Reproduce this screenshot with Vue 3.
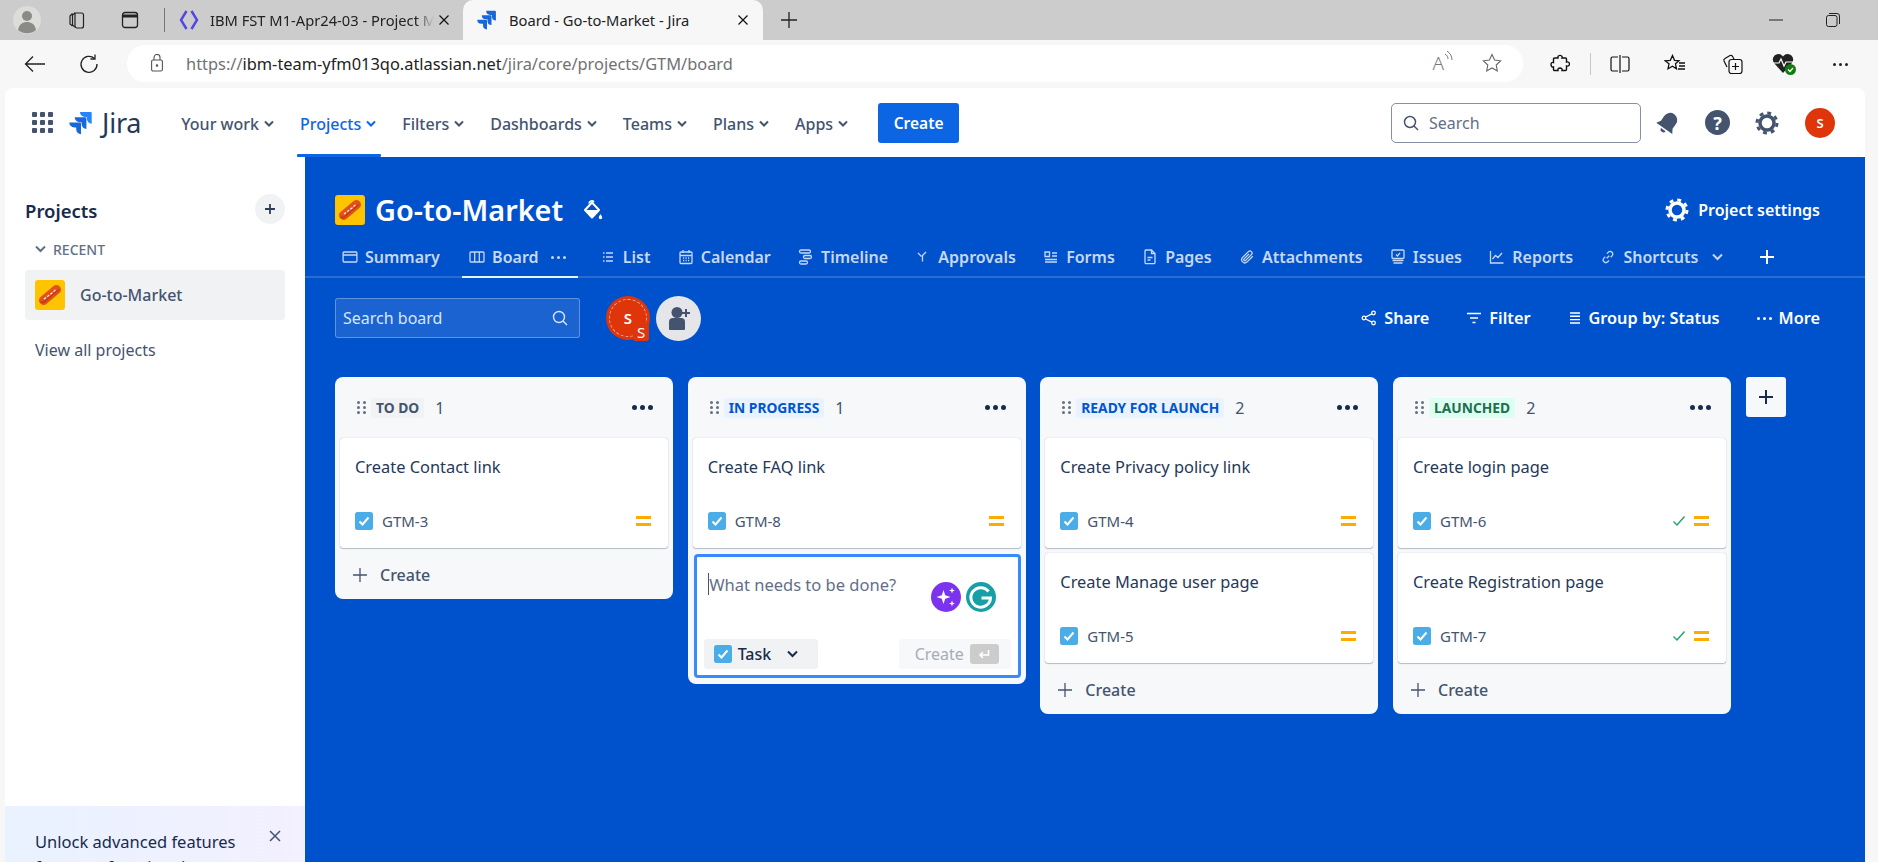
<script setup>
const navItems = [
  { label: 'Your work' },
  { label: 'Projects', active: true },
  { label: 'Filters' },
  { label: 'Dashboards' },
  { label: 'Teams' },
  { label: 'Plans' },
  { label: 'Apps' }
]
const tabs = [
  { label: 'Summary', d: 'M2 3h12a.9.9 0 0 1 .9.9v8.2a.9.9 0 0 1-.9.9H2a.9.9 0 0 1-.9-.9V3.900A.9.9 0 0 1 2 3zM1.100 6h13.800' },
  { label: 'Board', active: true, d: 'M2 3h12a1 1 0 0 1 1 1v8a1 1 0 0 1-1 1H2a1 1 0 0 1-1-1V4a1 1 0 0 1 1-1zM5.700 3v10M10.300 3v10' },
  { label: 'List', d: 'M3 4h1.500M6 4h7M3 8h1.500M6 8h7M3 12h1.500M6 12h7' },
  { label: 'Calendar', d: 'M3 3h10a1 1 0 0 1 1 1v9.500a1 1 0 0 1-1 1H3a1 1 0 0 1-1-1V4a1 1 0 0 1 1-1zM5 1v3M11 1v3M2 6.500h12M5 9h1.200M7.500 9h1.200M10 9h1.200M5 11.500h1.200M7.500 11.500h1.200M10 11.500h1.200' },
  { label: 'Timeline', d: 'M3 1h8a1.300 1.300 0 0 1 0 3H3a1.300 1.300 0 0 1 0-3zM7 6.500h5a1.300 1.300 0 0 1 0 3H7a1.300 1.300 0 0 1 0-3zM3 12h5a1.300 1.300 0 0 1 0 3H3a1.300 1.300 0 0 1 0-3z' },
  { label: 'Approvals', d: 'M3 4l3.500 3.500M11 3L7.500 6.500v6' },
  { label: 'Forms', d: 'M2 3h4.500v4.500H2zM9 4h5M9 7h5M2 10.500h12M2 13h12' },
  { label: 'Pages', d: 'M4 1h5.500L13 4.500v9a1.200 1.200 0 0 1-1.200 1.200H4.200A1.200 1.200 0 0 1 3 13.500V2.200A1.200 1.200 0 0 1 4 1zM9.500 1v3.500H13M5.500 8.500h5M5.500 11h3' },
  { label: 'Attachments', d: 'M13.800 7.200l-5.900 5.900a3.200 3.200 0 0 1-4.500-4.500l6-6a2.100 2.100 0 0 1 3 3l-5.800 5.800a1 1 0 0 1-1.500-1.500l5-5' },
  { label: 'Issues', d: 'M3 1h10a1 1 0 0 1 1 1v6.500a1 1 0 0 1-1 1H3a1 1 0 0 1-1-1V2a1 1 0 0 1 1-1zM6 5.500l1.500 1.500L10 3.800M2.500 11.500h11M3.500 14h9' },
  { label: 'Reports', d: 'M1.500 2v12h13M3.500 10l3-3.500 2.500 2L13 4' },
  { label: 'Shortcuts', d: 'M6.700 9.300l2.600-2.600M7 4.500l1.300-1.300a2.600 2.600 0 0 1 3.700 3.700l-1.300 1.300M9 11.500l-1.300 1.300a2.600 2.600 0 0 1-3.700-3.700l1.300-1.300' }
]
const columns = [
  { name: 'TO DO', tone: 'grey', count: 1, cards: [{ title: 'Create Contact link', key: 'GTM-3' }] },
  { name: 'IN PROGRESS', tone: 'blue', count: 1, composer: true, cards: [{ title: 'Create FAQ link', key: 'GTM-8' }] },
  { name: 'READY FOR LAUNCH', tone: 'blue', count: 2, cards: [{ title: 'Create Privacy policy link', key: 'GTM-4' }, { title: 'Create Manage user page', key: 'GTM-5' }] },
  { name: 'LAUNCHED', tone: 'green', count: 2, cards: [{ title: 'Create login page', key: 'GTM-6', done: true }, { title: 'Create Registration page', key: 'GTM-7', done: true }] }
]
</script>

<template>
  <div class="page">
    <header class="tabstrip">
      <span class="profile">
        <svg width="28" height="28" viewBox="0 0 28 28"><circle cx="14" cy="14" r="14" fill="#dcdcd8"/><circle cx="14" cy="10" r="5" fill="#8a8a86"/><path d="M5 24c1-6 5-8 9-8s8 2 9 8a14 14 0 0 1-18 0z" fill="#8a8a86"/></svg>
      </span>
      <svg class="workspaces" width="20" height="20" viewBox="0 0 20 20" fill="none" stroke="#222" stroke-width="1.200"><path d="M8 3h6.500a2 2 0 0 1 2 2v11a2 2 0 0 1-2 2H10a2 2 0 0 1-2-2z"/><path d="M8 3L5.500 5v10L8 17M5.500 3.500L3 6v8l2.500 2"/></svg>
      <svg class="tab-actions" width="20" height="20" viewBox="0 0 20 20" fill="none" stroke="#222" stroke-width="1.300"><rect x="2.500" y="2.500" width="15" height="15" rx="2.500"/><path d="M2.500 6h15" stroke-width="3"/></svg>
      <span class="strip-divider"></span>
      <div class="tab tab-idle">
        <svg class="tab-fav" width="22" height="22" viewBox="0 0 22 22" fill="none" stroke="#4f46e5" stroke-width="2.400"><path d="M8.500 2L3 11l5.500 9M13.500 2L19 11l-5.500 9"/></svg>
        <span class="tab-title tab-fade">IBM FST M1-Apr24-03 - Project M</span>
        <svg class="tab-x" width="12" height="12" viewBox="0 0 12 12" stroke="#111" stroke-width="1.200"><path d="M1.500 1.500l9 9M10.500 1.500l-9 9"/></svg>
      </div>
      <div class="tab tab-live">
        <svg class="tab-fav" width="20" height="20" viewBox="0 0 24 24" fill="#1868db"><path d="M21.700 1H11a4.900 4.900 0 0 0 4.900 4.900h2v1.900a4.900 4.900 0 0 0 4.800 4.900V2a1 1 0 0 0-1-1z"/><path d="M16.400 6.300H5.700a4.900 4.900 0 0 0 4.900 4.900h2v1.900a4.900 4.900 0 0 0 4.800 4.900V7.300a1 1 0 0 0-1-1z"/><path d="M11 11.600H.3a4.900 4.900 0 0 0 4.900 4.900h2v1.900a4.900 4.900 0 0 0 4.800 4.900V12.600a1 1 0 0 0-1-1z"/></svg>
        <span class="tab-title">Board - Go-to-Market - Jira</span>
        <svg class="tab-x" width="12" height="12" viewBox="0 0 12 12" stroke="#111" stroke-width="1.200"><path d="M1.500 1.500l9 9M10.500 1.500l-9 9"/></svg>
      </div>
      <svg class="new-tab" width="16" height="16" viewBox="0 0 16 16" stroke="#222" stroke-width="1.300"><path d="M8 0v16M0 8h16"/></svg>
      <span class="grow"></span>
      <svg class="win-min" width="14" height="2" viewBox="0 0 14 2"><path d="M0 1h14" stroke="#222"/></svg>
      <svg class="win-max" width="14" height="14" viewBox="0 0 14 14" fill="none" stroke="#222"><rect x=".5" y="2.500" width="10.500" height="11" rx="2"/><path d="M3 .5h8a2.500 2.500 0 0 1 2.500 2.500v8"/></svg>
    </header>

    <div class="addressbar">
      <svg class="back" width="22" height="18" viewBox="0 0 22 18" fill="none" stroke="#222" stroke-width="1.300"><path d="M21 9H1.500M9 1.500L1.500 9 9 16.500"/></svg>
      <svg class="reload" width="20" height="20" viewBox="0 0 20 20" fill="none" stroke="#222" stroke-width="1.300"><path d="M15.500 4.500A8 8 0 1 0 18 10"/><path d="M16 .5v4.500h-4.500"/></svg>
      <div class="omnibox">
        <svg class="lock" width="12" height="18" viewBox="0 0 12 18" fill="none" stroke="#555" stroke-width="1.100"><rect x=".6" y="6" width="10.800" height="11" rx="1.500"/><path d="M3 6V3.500a3 3 0 0 1 6 0V6"/><circle cx="6" cy="11.500" r=".7" fill="#555"/></svg>
        <span class="url"><span class="url-dim">https://</span><span class="url-host">ibm-team-yfm013qo.atlassian.net</span><span class="url-dim">/jira/core/projects/GTM/board</span></span>
        <span class="grow"></span>
        <span class="read-aloud">A<svg width="9" height="14" viewBox="0 0 9 14" fill="none" stroke="#777"><path d="M1 4c2 1 3 3 3 5M3 1c3 2 5 5 5 9"/></svg></span>
        <svg class="fav-star" width="20" height="20" viewBox="0 0 20 20" fill="none" stroke="#666" stroke-width="1.100"><path d="M10 1.500l2.600 5.500 6 .8-4.400 4.200 1.100 6L10 15l-5.300 3 1.100-6L1.400 7.800l6-.8z"/></svg>
      </div>
      <svg class="b-puzzle" width="20" height="20" viewBox="0 0 20 20" fill="none" stroke="#111" stroke-width="1.400"><path d="M8 2.500c.5-1.500 3.500-1.500 4 0 .3 1 0 1.500 0 1.500h3.500a1 1 0 0 1 1 1v3c1.500-.5 3 .5 3 2s-1.500 2.500-3 2v3.500a1 1 0 0 1-1 1H12c.5-1.500-.5-2.500-2-2.500s-2.500 1-2 2.500H4.500a1 1 0 0 1-1-1V13C2 13.500 1 12 1 10.500S2 8 3.500 8.500V5a1 1 0 0 1 1-1H8z"/></svg>
      <span class="b-div"></span>
      <svg class="b-split" width="20" height="18" viewBox="0 0 20 18" fill="none" stroke="#111" stroke-width="1.200"><path d="M8 2H2.500a1.500 1.500 0 0 0-1.500 1.500v11A1.500 1.500 0 0 0 2.500 16H8M12 2h5.500A1.500 1.500 0 0 1 19 3.500v11a1.500 1.500 0 0 1-1.500 1.500H12M10 0v18"/></svg>
      <svg class="b-favs" width="22" height="20" viewBox="0 0 22 20" fill="none" stroke="#111" stroke-width="1.300"><path d="M8.500 1.500l2 4.800 4.500.5-3.500 3 1 5-4-2.500-4.500 2.500 1-5L1 6.800l5.300-.5zM15 9h6M15 12h6M14 15h7"/></svg>
      <svg class="b-coll" width="22" height="22" viewBox="0 0 22 22" fill="none" stroke="#111" stroke-width="1.200"><path d="M5 14L2 8a2 2 0 0 1 1-2.500L8 2.500a2 2 0 0 1 2.500.8L12 6"/><rect x="7" y="6.500" width="13" height="14" rx="2.500"/><path d="M13.500 10v7M10 13.500h7"/></svg>
      <span class="b-heart">
        <svg width="26" height="24" viewBox="0 0 26 24"><path d="M11 21L2 11a5.500 5.500 0 0 1 8-7.500l1 1 1-1A5.500 5.500 0 0 1 20 11z" fill="#222"/><path d="M1 11h6l2-4 3 7 2-4h8" fill="none" stroke="#fff" stroke-width="1.200"/><circle cx="18.500" cy="17.500" r="5.500" fill="#107c10"/><path d="M16 17.500l2 2 3-3.500" fill="none" stroke="#fff" stroke-width="1.300"/></svg>
      </span>
      <span class="b-more"><i></i><i></i><i></i></span>
    </div>

    <div class="shell">
      <nav class="topnav">
        <span class="grid-dots"><i v-for="n in 9" :key="n"></i></span>
        <svg class="logo" width="24" height="24" viewBox="0 0 24 24" fill="#1868db"><path d="M21.700 1H11a4.900 4.900 0 0 0 4.900 4.900h2v1.900a4.900 4.900 0 0 0 4.800 4.900V2a1 1 0 0 0-1-1z" fill="#2684ff"/><path d="M16.400 6.300H5.700a4.900 4.900 0 0 0 4.900 4.900h2v1.900a4.900 4.900 0 0 0 4.800 4.900V7.300a1 1 0 0 0-1-1z"/><path d="M11 11.600H.3a4.900 4.900 0 0 0 4.900 4.900h2v1.900a4.900 4.900 0 0 0 4.800 4.900V12.600a1 1 0 0 0-1-1z"/></svg>
        <span class="wordmark">Jira</span>
        <ul class="nav-list">
          <li v-for="item in navItems" :key="item.label" class="nav-item" :class="{ 'nav-on': item.active }">
            <span>{{ item.label }}</span>
            <svg width="10" height="7" viewBox="0 0 10 7" fill="none" stroke="currentColor" stroke-width="2"><path d="M1 1.500l4 4 4-4"/></svg>
          </li>
        </ul>
        <button class="nav-create">Create</button>
        <span class="grow"></span>
        <label class="global-search">
          <svg width="16" height="16" viewBox="0 0 16 16" fill="none" stroke="#44546f" stroke-width="1.500"><circle cx="7" cy="7" r="5.500"/><path d="M11 11l4 4"/></svg>
          <span>Search</span>
        </label>
        <svg class="nav-bell" width="26" height="26" viewBox="0 0 24 24" fill="#44546f"><g transform="rotate(35 12 12)"><path d="M12 2a6.500 6.500 0 0 0-6.500 6.500V14L3 18h18l-2.500-4V8.500A6.500 6.500 0 0 0 12 2z"/><path d="M9.500 19.500a2.500 2.500 0 0 0 5 0z"/></g></svg>
        <span class="nav-help">?</span>
        <svg class="nav-gear" width="26" height="26" viewBox="0 0 26 26" fill="none" stroke="#44546f"><circle cx="13" cy="13" r="7" stroke-width="3.500"/><circle cx="13" cy="13" r="10" stroke-width="3" stroke-dasharray="3.850 4"/></svg>
        <span class="nav-avatar">S</span>
      </nav>

      <div class="body">
        <aside class="sidebar">
          <div class="side-head">
            <span class="side-title">Projects</span>
            <span class="side-add">
              <svg width="12" height="12" viewBox="0 0 12 12" stroke="#2c3e5d" stroke-width="1.800"><path d="M6 1v10M1 6h10"/></svg>
            </span>
          </div>
          <div class="side-recent">
            <svg width="11" height="8" viewBox="0 0 11 8" fill="none" stroke="#626f86" stroke-width="2"><path d="M1 1.500l4.500 4.500L10 1.500"/></svg>
            <span>RECENT</span>
          </div>
          <div class="side-project">
            <svg class="proj-icon" width="30" height="30" viewBox="0 0 30 30"><rect width="30" height="30" rx="3" fill="#ffc400"/><rect x="2" y="10.500" width="26" height="9" rx="4.500" transform="rotate(-40 15 15)" fill="#e2511c"/><path d="M6 21.500Q7 23 9 22L24 9.500" fill="none" stroke="#c23c0c" stroke-width="1.500"/><path d="M9 19l4-3 4-3 4-3.500" fill="none" stroke="#fff" stroke-width="1.100" stroke-dasharray="2.500 1.500"/></svg>
            <span>Go-to-Market</span>
          </div>
          <div class="side-all">View all projects</div>
          <span class="grow"></span>
          <div class="promo">
            <span class="promo-text">Unlock advanced features for more functional</span>
            <svg class="promo-x" width="12" height="12" viewBox="0 0 12 12" stroke="#44546f" stroke-width="1.500"><path d="M1 1l10 10M11 1L1 11"/></svg>
          </div>
        </aside>

        <main class="board">
          <div class="proj-head">
            <svg class="proj-icon" width="30" height="30" viewBox="0 0 30 30"><rect width="30" height="30" rx="3" fill="#ffc400"/><rect x="2" y="10.500" width="26" height="9" rx="4.500" transform="rotate(-40 15 15)" fill="#e2511c"/><path d="M6 21.500Q7 23 9 22L24 9.500" fill="none" stroke="#c23c0c" stroke-width="1.500"/><path d="M9 19l4-3 4-3 4-3.500" fill="none" stroke="#fff" stroke-width="1.100" stroke-dasharray="2.500 1.500"/></svg>
            <h1>Go-to-Market</h1>
            <svg class="paint" width="20" height="24" viewBox="0 0 20 24"><path d="M6 5.500a2.800 2.800 0 0 1 5-1.500" fill="none" stroke="#fff" stroke-width="1.600"/><path d="M9 4.500L16 12l-7 7.500L2 12z" fill="none" stroke="#fff" stroke-width="2" stroke-linejoin="round"/><path d="M2 12h14l-7 7.500z" fill="#fff"/><path d="M17.500 16c1 1.700 1.700 2.700 1.700 3.500a1.700 1.700 0 0 1-3.400 0c0-.8.700-1.800 1.700-3.500z" fill="#fff"/></svg>
            <span class="grow"></span>
            <svg width="26" height="26" viewBox="0 0 26 26" fill="none" stroke="#fff"><circle cx="13" cy="13" r="7" stroke-width="3.500"/><circle cx="13" cy="13" r="10" stroke-width="3" stroke-dasharray="3.850 4"/></svg>
            <span class="proj-settings">Project settings</span>
          </div>

          <div class="tabs">
            <div v-for="tab in tabs" :key="tab.label" class="tabitem" :class="{ 'tab-on': tab.active }">
              <svg width="16" height="16" viewBox="0 0 16 16" fill="none" stroke="currentColor" stroke-width="1.300"><path :d="tab.d"/></svg>
              <span>{{ tab.label }}</span>
              <span v-if="tab.active" class="tab-dots"><i></i><i></i><i></i></span>
            </div>
            <svg class="tab-chev" width="11" height="8" viewBox="0 0 11 8" fill="none" stroke="#c7d8f3" stroke-width="2"><path d="M1 1.500l4.500 4.500L10 1.500"/></svg>
            <svg class="tab-plus" width="16" height="16" viewBox="0 0 16 16" stroke="#fff" stroke-width="2"><path d="M8 1v14M1 8h14"/></svg>
          </div>

          <div class="toolbar">
            <label class="board-search">
              <span>Search board</span>
              <svg width="16" height="16" viewBox="0 0 16 16" fill="none" stroke="#dbe6f8" stroke-width="1.400"><circle cx="7" cy="7" r="5.500"/><path d="M11 11l4 4"/></svg>
            </label>
            <span class="tb-avatar"><span class="tb-ring">S</span><span class="tb-sub">S</span></span>
            <span class="tb-adduser">
              <svg width="26" height="26" viewBox="0 0 26 26" fill="#44546f"><circle cx="11" cy="7.500" r="5.500"/><path d="M3 17a4 4 0 0 1 4-4h8a4 4 0 0 1 4 4v7a1 1 0 0 1-1 1H4a1 1 0 0 1-1-1z"/><path d="M20 4v8M16 8h8" stroke="#44546f" stroke-width="2"/></svg>
            </span>
            <span class="grow"></span>
            <span class="tb-act">
              <svg width="16" height="16" viewBox="0 0 16 16" fill="none" stroke="#fff" stroke-width="1.300"><circle cx="3" cy="8" r="1.800"/><circle cx="12.500" cy="3" r="1.800"/><circle cx="12.500" cy="13" r="1.800"/><path d="M4.600 7l6.300-3.200M4.600 9l6.300 3.200"/></svg>Share</span>
            <span class="tb-act">
              <svg width="16" height="14" viewBox="0 0 16 14" stroke="#fff" stroke-width="1.500"><path d="M1 2.500h14M4 7h8M6.500 11.500h3"/></svg>Filter</span>
            <span class="tb-act">
              <svg width="14" height="14" viewBox="0 0 14 14" stroke="#fff" stroke-width="1.400"><path d="M2 2h10M2 5.300h10M2 8.600h10M2 12h10"/></svg>Group by: Status</span>
            <span class="tb-act">
              <span class="tb-dots"><i></i><i></i><i></i></span>More</span>
          </div>

          <section class="columns">
            <article v-for="col in columns" :key="col.name" class="column">
              <header class="col-head">
                <span class="grip"><i v-for="n in 6" :key="n"></i></span>
                <span class="lozenge" :class="'lz-' + col.tone">{{ col.name }}</span>
                <span class="col-count">{{ col.count }}</span>
                <span class="grow"></span>
                <span class="col-more"><i></i><i></i><i></i></span>
              </header>
              <div class="col-cards">
                <div v-for="card in col.cards" :key="card.key" class="card">
                  <div class="card-title">{{ card.title }}</div>
                  <div class="card-foot">
                    <svg class="task" width="18" height="18" viewBox="0 0 18 18"><rect width="18" height="18" rx="2.500" fill="#4bade8"/><path d="M4.500 9.500l3 3 6-7" fill="none" stroke="#fff" stroke-width="2"/></svg>
                    <span class="card-key">{{ card.key }}</span>
                    <span class="grow"></span>
                    <svg v-if="card.done" class="done" width="14" height="12" viewBox="0 0 14 12" fill="none" stroke="#22a06b" stroke-width="1.400"><path d="M1.500 6.500l3.500 3.500 7.500-8.500"/></svg>
                    <span class="prio"></span>
                  </div>
                </div>
              </div>
              <div v-if="col.composer" class="composer">
                <div class="composer-top">
                  <span class="caret"></span>
                  <span class="placeholder">What needs to be done?</span>
                </div>
                <div class="composer-aids">
                  <svg width="30" height="30" viewBox="0 0 30 30"><circle cx="15" cy="15" r="15" fill="#7c33ee"/><path d="M12.500 8l1.700 5.300 5.300 1.700-5.300 1.700-1.700 5.300-1.700-5.300L5.500 15l5.300-1.700z" fill="#fff"/><path d="M21 5.500l.8 2.200 2.200.8-2.200.8-.8 2.200-.8-2.200-2.200-.8 2.200-.8zM21 18.500l.8 2.200 2.200.8-2.200.8-.8 2.200-.8-2.200-2.200-.8 2.200-.8z" fill="#fff"/></svg>
                  <svg width="30" height="30" viewBox="0 0 30 30"><circle cx="15" cy="15" r="15" fill="#15a0a6"/><path d="M22.500 9.500A9.800 9.800 0 1 0 24.500 16H15.500" fill="none" stroke="#fff" stroke-width="3"/></svg>
                </div>
                <div class="composer-foot">
                  <span class="type-btn">
                    <svg class="task" width="18" height="18" viewBox="0 0 18 18"><rect width="18" height="18" rx="2.500" fill="#4bade8"/><path d="M4.500 9.500l3 3 6-7" fill="none" stroke="#fff" stroke-width="2"/></svg>
                    <span>Task</span>
                    <svg width="11" height="8" viewBox="0 0 11 8" fill="none" stroke="#172b4d" stroke-width="2"><path d="M1 1.500l4.500 4.500L10 1.500"/></svg>
                  </span>
                  <span class="grow"></span>
                  <span class="submit-btn">
                    <span>Create</span>
                    <span class="kbd"><svg width="12" height="10" viewBox="0 0 12 10" fill="none" stroke="#fff" stroke-width="1.600"><path d="M10.500 1v5H2M5 3L2 6l3 3"/></svg></span>
                  </span>
                </div>
              </div>
              <div v-else class="col-create">
                <svg width="14" height="14" viewBox="0 0 14 14" stroke="#44546f" stroke-width="1.300"><path d="M7 0v14M0 7h14"/></svg>
                <span>Create</span>
              </div>
            </article>
            <button class="add-col">
              <svg width="16" height="16" viewBox="0 0 16 16" stroke="#172b4d" stroke-width="2"><path d="M8 1v14M1 8h14"/></svg>
            </button>
          </section>
        </main>
      </div>
    </div>
  </div>
</template>

<style>
html, body { margin: 0; height: 100%; overflow: hidden; background: #f7f7f7; }
</style>

<style scoped>
* { box-sizing: border-box; }
i { display: block; font-style: normal; }
svg { display: block; flex: none; }
.grow { flex: 1; }
.page {
  width: 1878px; height: 862px; overflow: hidden; display: flex; flex-direction: column;
  background: #f7f7f7; color: #172b4d;
  font-family: "Noto Sans", "Open Sans", "Liberation Sans", sans-serif;
}

/* browser chrome */
.tabstrip { height: 40px; flex: none; background: #cccccc; display: flex; align-items: center; padding-left: 13px; }
.profile { width: 28px; height: 28px; display: block; }
.workspaces { margin-left: 26px; }
.tab-actions { margin-left: 33px; }
.strip-divider { width: 1px; height: 24px; background: #777; margin-left: 24px; }
.tab { height: 40px; display: flex; align-items: center; font-size: 14.700px; color: #222; }
.tab-idle { width: 292px; padding-left: 7px; margin-left: 6px; flex: none; }
.tab-live { width: 300px; flex: none; background: #f7f7f7; border-radius: 10px 10px 0 0; padding-left: 14px; }
.tab-title { margin-left: 10px; white-space: nowrap; overflow: hidden; }
.tab-fade { width: 224px; -webkit-mask-image: linear-gradient(90deg, #000 92%, transparent); mask-image: linear-gradient(90deg, #000 92%, transparent); }
.tab-live .tab-title { width: 222px; margin-left: 12px; }
.tab-x { margin-left: 4px; }
.tab-live .tab-x { margin-left: 6px; }
.new-tab { margin-left: 18px; }
.win-min { margin-right: 43px; }
.win-max { margin-right: 38px; }

.addressbar { height: 48px; flex: none; display: flex; align-items: center; padding: 0 0 0 24px; background: #f7f7f7; }
.reload { margin-left: 33px; }
.omnibox {
  width: 1396px; height: 37px; margin: -2px 0 0 28px; background: #fff; border-radius: 18px;
  display: flex; align-items: center; padding-left: 24px; font-size: 16.400px;
}
.url { margin-left: 23px; white-space: nowrap; }
.url-dim { color: #717171; }
.url-host { color: #222; }
.read-aloud { display: flex; align-items: flex-start; font-size: 19px; color: #777; font-weight: 300; }
.fav-star { margin: 0 21px 0 29px; }
.b-puzzle { margin-left: 27px; }
.b-div { width: 1px; height: 22px; background: #c8c8c8; margin-left: 20px; }
.b-split { margin-left: 19px; }
.b-favs { margin-left: 34px; }
.b-coll { margin-left: 36px; }
.b-heart { display: block; margin-left: 28px; }
.b-more { display: flex; gap: 3px; margin-left: 35px; }
.b-more i { width: 3px; height: 3px; border-radius: 50%; background: #222; }

.shell { flex: 1; margin: 0 13px 0 5px; min-height: 0; background: #fff; border-radius: 8px 8px 0 0; display: flex; flex-direction: column; overflow: hidden; }

/* Jira nav */
.topnav { height: 69px; flex: none; display: flex; align-items: center; padding-left: 27px; position: relative; font-size: 16px; }
.grid-dots { display: grid; grid-template-columns: repeat(3, 5px); gap: 3px; }
.grid-dots i { width: 5px; height: 5px; border-radius: 1px; background: #44546f; }
.logo { margin-left: 16px; }
.wordmark { margin-left: 9px; font-size: 27px; line-height: 1; font-weight: 400; color: #253858; letter-spacing: -.2px; }
.nav-list { display: flex; list-style: none; margin: 0 0 0 40px; padding: 0; gap: 26px; }
.nav-item { display: flex; align-items: center; gap: 5px; color: #44546f; font-weight: 500; white-space: nowrap; position: relative; height: 69px; padding-top: 2px; }
.nav-on { color: #0c66e4; }
.nav-on::after { content: ""; position: absolute; left: -3px; right: -5px; bottom: 0; height: 3px; background: #0c66e4; border-radius: 1px; }
.nav-create { width: 81px; height: 40px; margin-left: 30px; border: 0; border-radius: 3px; background: #0c66e4; color: #fff; font: 600 15.500px "Noto Sans", sans-serif; }
.global-search { width: 250px; height: 40px; border: 1px solid #8590a2; border-radius: 5px; display: flex; align-items: center; gap: 10px; padding-left: 11px; color: #626f86; font-size: 16px; }
.nav-bell { margin-left: 14px; }
.nav-help { width: 25px; height: 25px; margin-left: 24px; border-radius: 50%; background: #44546f; color: #fff; font-weight: 700; font-size: 18px; display: flex; align-items: center; justify-content: center; }
.nav-gear { margin-left: 24px; }
.nav-avatar { width: 30px; height: 30px; margin: 0 30px 0 25px; border-radius: 50%; background: #de350b; color: #fff; font-size: 13px; font-weight: 600; display: flex; align-items: center; justify-content: center; }

.body { flex: 1; min-height: 0; display: flex; }

/* sidebar */
.sidebar { width: 300px; flex: none; background: #fff; display: flex; flex-direction: column; padding-top: 37px; }
.side-head { display: flex; align-items: center; justify-content: space-between; padding: 0 20px 0 20px; height: 30px; }
.side-title { font-size: 18.500px; font-weight: 600; color: #172b4d; padding-top: 3px; }
.side-add { width: 30px; height: 30px; border-radius: 50%; background: #f1f2f4; display: flex; align-items: center; justify-content: center; }
.side-recent { display: flex; align-items: center; gap: 7px; margin: 15px 0 0 30px; height: 20px; color: #626f86; font-size: 14px; font-weight: 500; }
.side-project { margin: 11px 20px 0; height: 50px; border-radius: 4px; background: #f1f2f4; display: flex; align-items: center; gap: 15px; padding-left: 10px; color: #44546f; font-size: 16px; font-weight: 500; }
.side-all { margin: 19px 0 0 30px; color: #44546f; font-size: 16px; line-height: 22px; }
.promo { height: 56px; flex: none; background: linear-gradient(90deg, #e9f2ff, #f3f0ff); padding: 23px 24px 0 30px; display: flex; justify-content: space-between; overflow: hidden; }
.promo-text { width: 208px; font-size: 16.500px; line-height: 25px; color: #172b4d; }
.promo-x { margin-top: 1px; }

/* board */
.board { flex: 1; min-width: 0; background: #0052cc; display: flex; flex-direction: column; padding: 0 45px 0 30px; color: #fff; }
.proj-head { height: 36px; margin-top: 35px; flex: none; display: flex; align-items: center; }
.proj-head h1 { margin: 0 0 0 10px; font-size: 28.800px; line-height: 36px; font-weight: 600; color: #fff; }
.paint { margin-left: 20px; }
.proj-settings { margin-left: 8px; font-size: 16px; font-weight: 600; }
.tabs { height: 44px; margin: 6px -45px 0 -30px; padding: 4px 0 0 37px; flex: none; display: flex; align-items: center; gap: 27.300px; border-bottom: 2px solid rgba(255,255,255,.16); color: #c7d8f3; font-size: 16px; font-weight: 600; white-space: nowrap; }
.tabitem { display: flex; align-items: center; gap: 7px; height: 38px; position: relative; }
.tabitem:first-child { margin-right: 2px; }
.tab-on { margin-right: 7px; }
.tab-on::after { content: ""; position: absolute; left: -7px; right: -12px; bottom: -2px; height: 2px; background: #e9f2ff; }
.tab-dots { display: flex; gap: 3px; margin-left: 5px; }
.tab-dots i { width: 3px; height: 3px; border-radius: 50%; background: currentColor; }
.tab-chev { margin-left: -14px; }
.tab-plus { margin-left: 9px; }
.toolbar { height: 40px; margin-top: 20px; flex: none; display: flex; align-items: center; }
.board-search { width: 245px; height: 40px; border: 1px solid rgba(255,255,255,.3); border-radius: 3px; background: rgba(255,255,255,.1); display: flex; align-items: center; justify-content: space-between; padding: 0 11px 0 7px; color: #dbe6f8; font-size: 16px; }
.tb-avatar { width: 44px; height: 44px; margin-left: 26px; border-radius: 50%; background: #de350b; position: relative; display: flex; align-items: center; justify-content: center; font-size: 15px; font-weight: 600; }
.tb-ring { width: 38px; height: 38px; border: 1px dashed rgba(255,255,255,.6); border-radius: 50%; display: flex; align-items: center; justify-content: center; }
.tb-sub { position: absolute; right: 1px; bottom: -1px; width: 16px; height: 18px; background: #de350b; border-radius: 3px; display: flex; align-items: center; justify-content: center; font-size: 15px; font-weight: 400; }
.tb-adduser { width: 45px; height: 45px; margin-left: 6px; border-radius: 50%; background: #e4e6ea; display: flex; align-items: center; justify-content: center; }
.tb-act { display: flex; align-items: center; gap: 7px; margin-left: 37px; font-size: 16.300px; font-weight: 600; white-space: nowrap; }
.tb-dots { display: flex; gap: 3px; }
.tb-dots i { width: 3px; height: 3px; border-radius: 50%; background: #fff; }

.columns { display: flex; align-items: flex-start; gap: 14.670px; margin-top: 39px; color: #172b4d; }
.column { width: 338px; flex: none; background: #f7f8f9; border-radius: 8px; }
.col-head { height: 61px; display: flex; align-items: center; padding: 0 20px 0 22px; }
.grip { display: grid; grid-template-columns: 3px 3px; gap: 2px 3px; }
.grip i { width: 3px; height: 3px; border-radius: 50%; background: #626f86; }
.lozenge { margin-left: 5px; height: 20px; padding: 0 5px; border-radius: 3px; font-size: 13.800px; line-height: 20px; font-weight: 700; white-space: nowrap; }
.lz-grey { background: #f1f2f4; color: #44546f; }
.lz-blue { background: #e9f2ff; color: #0055cc; }
.lz-green { background: #dcfff1; color: #216e4e; }
.col-count { margin-left: 11px; font-size: 16px; color: #44546f; }
.col-more { display: flex; gap: 3px; }
.col-more i { width: 5px; height: 5px; border-radius: 50%; background: #172b4d; }
.col-cards { display: flex; flex-direction: column; gap: 5px; padding: 0 5px; }
.card { height: 110px; background: #fff; border-radius: 3px; box-shadow: 0 1px 1px rgba(9,30,66,.25), 0 0 1px rgba(9,30,66,.31); padding: 17px 17px 0 15px; }
.card-title { font-size: 16.400px; line-height: 24px; color: #253858; }
.card-foot { display: flex; align-items: center; margin-top: 30px; height: 24px; }
.card-key { margin-left: 9px; font-size: 15px; color: #44546f; }
.done { margin-right: 8px; }
.prio { width: 15px; height: 10px; border-top: 3px solid #ffab00; border-bottom: 3px solid #ffab00; }
.col-create { height: 51px; display: flex; align-items: center; gap: 13px; padding: 2px 0 0 18px; font-size: 16px; font-weight: 500; color: #44546f; }
.composer { height: 124px; margin: 6px 5px 6px 6px; width: 327px; border: 3px solid #388bff; border-radius: 4px; background: #fff; position: relative; padding: 0 7px; }
.composer-top { display: flex; align-items: center; height: 54px; padding-left: 4px; }
.caret { width: 1.500px; height: 22px; background: #44546f; flex: none; }
.placeholder { font-size: 16.500px; color: #626f86; }
.composer-aids { position: absolute; top: 25px; left: 234px; display: flex; gap: 5px; }
.composer-foot { display: flex; margin-top: 28px; }
.type-btn { width: 114px; height: 30px; border-radius: 3px; background: #f1f2f4; display: flex; align-items: center; padding-left: 10px; font-size: 16px; font-weight: 500; color: #172b4d; }
.type-btn > span { margin: 0 16px 0 6px; }
.submit-btn { width: 112px; height: 30px; border-radius: 3px; background: #f7f8f9; display: flex; align-items: center; padding-left: 16px; gap: 6px; font-size: 16px; color: #a5adba; }
.kbd { width: 29px; height: 20px; border-radius: 3px; background: #cccccc; display: flex; align-items: center; justify-content: center; }
.add-col { width: 40px; height: 40px; border: 0; border-radius: 3px; background: #f7f8f9; display: flex; align-items: center; justify-content: center; padding: 0; }
</style>
